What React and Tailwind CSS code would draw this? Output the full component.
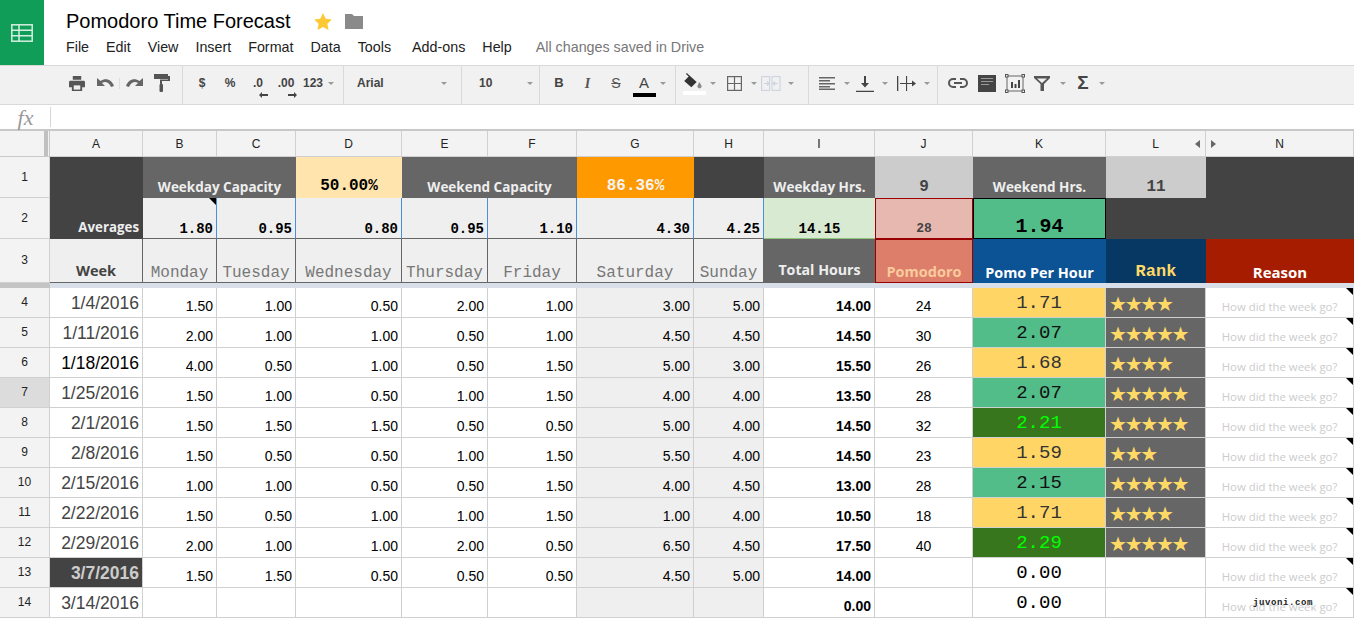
import React from "react";

const SANS = "font-['Liberation_Sans',Arial,sans-serif]";
const OPEN = "font-['Open_Sans',sans-serif]";
const MONO = "font-['Liberation_Mono',monospace]";

const Caret = () => (
  <svg width="6" height="3" viewBox="0 0 6 3"><path d="M0 0h6L3 3z" fill="#999" /></svg>
);

const Print = () => (
  <svg width="16" height="15" viewBox="0 0 17 16" fill="#555"><path d="M4 0h9v4H4zM1.500 5h14A1.500 1.500 0 0 1 17 6.500V12h-3v4H3v-4H0V6.500A1.500 1.500 0 0 1 1.500 5z" /><path d="M5 10h7v4.500H5z" fill="#eee" /></svg>
);
const Undo = () => (
  <svg width="17" height="11" viewBox="0 0 17 11" fill="#666"><path d="M0 0v8h8L5 5c3-2 7-1 9 4l3-1C15 2 9-1 3.500 3z" /></svg>
);
const Redo = () => (
  <svg width="17" height="11" viewBox="0 0 17 11" fill="#666"><path d="M17 0v8H9l3-3C9 3 5 4 3 9L0 8c2-6 8-9 13.500-5z" /></svg>
);
const Roller = () => (
  <svg width="16" height="18" viewBox="0 0 16 18" fill="#555"><path d="M0 0h14v5H0z" /><path d="M14 2h2v5H8v3H6V5.500h8z" /><rect x="5.500" y="10" width="3.500" height="8" rx="1" /></svg>
);
const Fill = () => (
  <svg width="20" height="16" viewBox="0 0 22 18" fill="#333"><path d="M3 0l2 2 9 8-6 6L0 9l5-5-3-3z" /><path d="M17 10c2 3 2.500 4 2.500 5a2.300 2.300 0 0 1-4.600 0c0-1 .5-2 2.100-5z" fill="#888" /></svg>
);
const Borders = () => (
  <svg width="15" height="15" viewBox="0 0 15 15" fill="none" stroke="#666" strokeWidth="1.200"><rect x=".6" y=".6" width="13.800" height="13.800" /><path d="M7.500 0v15M0 7.500h15" /></svg>
);
const Merge = () => (
  <svg width="20" height="15" viewBox="0 0 20 15" fill="none" stroke="#ccd3de" strokeWidth="1.100"><rect x=".6" y=".6" width="8" height="13.800" /><rect x="11" y=".6" width="8" height="13.800" /><path d="M3 7.500h5m-2-2 2 2-2 2M17 7.500h-5m2-2-2 2 2 2" /></svg>
);
const AlignL = () => (
  <svg width="16" height="13" viewBox="0 0 16 13" fill="#666"><path d="M0 0h16v1.500H0zM0 3h11v1.500H0zM0 6h16v1.500H0zM0 9h11v1.500H0zM0 11.500h16V13H0z" /></svg>
);
const VAlign = () => (
  <svg width="18" height="17" viewBox="0 0 18 17" fill="#444"><path d="M8 1h2v7h3l-4 4.500L5 8h3zM0 15.700h18V17H0z" /></svg>
);
const Wrap = () => (
  <svg width="20" height="15" viewBox="0 0 20 15" fill="#444"><path d="M0 0h1.300v15H0zM9 0h1.100v15H9zM3 7h12V4.500l4 3-4 3V8H3z" /></svg>
);
const LinkIcon = () => (
  <svg width="20" height="10" viewBox="0 0 20 10" fill="none" stroke="#555" strokeWidth="2"><path d="M8 1H5a4 4 0 0 0 0 8h3M12 1h3a4 4 0 0 1 0 8h-3M6 5h8" /></svg>
);
const Comment = () => (
  <svg width="18" height="17" viewBox="0 0 18 17" fill="#444"><path d="M0 0h18v17H0z" /><path d="M3 3.500h12M3 6.500h12M3 9.500h8" stroke="#999" strokeWidth="1.200" /></svg>
);
const Chart = () => (
  <svg width="20" height="19" viewBox="0 0 20 19" fill="none"><rect x="2" y="2" width="16" height="15" stroke="#666" /><path d="M6 8h2v6H6zM9.500 10h2v4h-2zM13 6h2v8h-2z" fill="#444" /><g fill="#eee" stroke="#555"><rect x=".5" y=".5" width="2.500" height="2.500" /><rect x="17" y=".5" width="2.500" height="2.500" /><rect x=".5" y="16" width="2.500" height="2.500" /><rect x="17" y="16" width="2.500" height="2.500" /></g></svg>
);
const Filter = () => (
  <svg width="16" height="15" viewBox="0 0 16 15" fill="#555"><path d="M0 0h16v2l-6 6v7H6.500V8L0 2zM3 2.500l5 4.500 5-4.500z" fillRule="evenodd" /></svg>
);
const ArrowL = ({ className }) => (
  <svg className={className} width="9" height="6" viewBox="0 0 9 6" fill="#444"><path d="M0 3l3-3v2h6v2H3v2z" /></svg>
);
const ArrowR = ({ className }) => (
  <svg className={className} width="9" height="6" viewBox="0 0 9 6" fill="#444"><path d="M9 3L6 0v2H0v2h6v2z" /></svg>
);

function Tool({ w, children, className = "" }) {
  return <div className={`flex shrink-0 items-center justify-center ${className}`} style={{ width: w }}>{children}</div>;
}

function Group({ w, children, last }) {
  return (
    <div className={`flex h-full shrink-0 items-center pb-[4px] ${last ? "" : "border-r border-[#d9d9d9]"}`} style={{ width: w }}>
      {children}
    </div>
  );
}

function Toolbar() {
  const label = `${SANS} text-[12px] font-bold text-[#444]`;
  return (
    <div className="flex h-[40px] items-center border-y border-[#d9d9d9] bg-[#f1f1f1] pl-[63px]">
      <Group w={120}>
        <Tool w={28}><Print /></Tool>
        <Tool w={29} className="border-r border-[#dddddd]"><Undo /></Tool>
        <Tool w={28}><Redo /></Tool>
        <Tool w={28}><Roller /></Tool>
      </Group>
      <Group w={161}>
        <Tool w={5} />
        <Tool w={28} className={label}>$</Tool>
        <Tool w={28} className={label}>%</Tool>
        <Tool w={28} className={`${label} relative`}>.0<ArrowL className="absolute bottom-[-6px] left-[15px]" /></Tool>
        <Tool w={28} className={`${label} relative`}>.00<ArrowR className="absolute bottom-[-6px] left-[16px]" /></Tool>
        <Tool w={26} className={label}>123</Tool>
        <Tool w={10}><Caret /></Tool>
      </Group>
      <Group w={118}>
        <span className={`${label} ml-[13px] w-[84px]`}>Arial</span>
        <Caret />
      </Group>
      <Group w={78}>
        <span className={`${label} ml-[17px] w-[48px]`}>10</span>
        <Caret />
      </Group>
      <Group w={136}>
        <Tool w={5} />
        <Tool w={28} className={`${label} text-[13px]`}>B</Tool>
        <Tool w={29} className="font-['Liberation_Serif',serif] text-[14px] font-bold italic text-[#555]">I</Tool>
        <Tool w={28} className={`${SANS} text-[14px] text-[#555] line-through`}>S</Tool>
        <Tool w={28} className={`${SANS} relative text-[15px] text-[#444]`}>A<span className="absolute -bottom-[3px] left-[3px] h-[4px] w-[23px] bg-black" /></Tool>
        <Tool w={10}><Caret /></Tool>
      </Group>
      <Group w={133}>
        <Tool w={7} />
        <Tool w={22} className="relative -mt-[4px]"><Fill /><span className="absolute -bottom-[6px] left-0 h-[4px] w-[23px] bg-white" /></Tool>
        <Tool w={16}><Caret /></Tool>
        <Tool w={26}><Borders /></Tool>
        <Tool w={13}><Caret /></Tool>
        <Tool w={22}><Merge /></Tool>
        <Tool w={18}><Caret /></Tool>
      </Group>
      <Group w={129}>
        <Tool w={6} />
        <Tool w={24}><AlignL /></Tool>
        <Tool w={15}><Caret /></Tool>
        <Tool w={22}><VAlign /></Tool>
        <Tool w={18}><Caret /></Tool>
        <Tool w={25}><Wrap /></Tool>
        <Tool w={16}><Caret /></Tool>
      </Group>
      <Group w={180} last>
        <Tool w={5} />
        <Tool w={29}><LinkIcon /></Tool>
        <Tool w={29}><Comment /></Tool>
        <Tool w={27}><Chart /></Tool>
        <Tool w={28}><Filter /></Tool>
        <Tool w={14}><Caret /></Tool>
        <Tool w={26} className={`${SANS} text-[19px] font-bold text-[#444]`}>Σ</Tool>
        <Tool w={12}><Caret /></Tool>
      </Group>
    </div>
  );
}

function Header() {
  const menu = ["File", "Edit", "View", "Insert", "Format", "Data", "Tools"];
  return (
    <div className="flex h-[65px]">
      <div className="flex w-[44px] items-center justify-center bg-[#0f9d58]">
        <svg width="22" height="18" viewBox="0 0 22 18" fill="none" stroke="#d5eee0" strokeWidth="1.500"><rect x=".8" y=".8" width="20.400" height="16.400" /><path d="M.8 6.200h20.400M.8 11.800h20.400M8 .8v16.400" /></svg>
      </div>
      <div className={`ml-[22px] flex flex-col ${SANS}`}>
        <div className="mt-[9px] flex h-[24px] items-center text-[20px] leading-none text-black">
          <span>Pomodoro Time Forecast</span>
          <svg className="ml-[23px]" width="18" height="17" viewBox="0 0 24 23"><path d="M12 0l3.700 7.800 8.300 1-6.100 5.800 1.600 8.400L12 18.800 4.500 23l1.600-8.400L0 8.800l8.300-1z" fill="#fcc934" /></svg>
          <svg className="ml-[13px]" width="18" height="15" viewBox="0 0 18 15"><path d="M0 0h7l2 2h9v13H0z" fill="#8a8a8a" /></svg>
        </div>
        <div className="mt-[4px] flex items-center gap-[17px] text-[14.3px] leading-[20px] text-[#222]">
          {menu.map((m) => <span key={m}>{m}</span>)}
          <span className="ml-[4px]">Add-ons</span>
          <span>Help</span>
          <span className="ml-[7px] text-[#777]">All changes saved in Drive</span>
        </div>
      </div>
    </div>
  );
}

function FormulaBar() {
  return (
    <div className="flex h-[26px] items-center border-b-2 border-[#c8c8c8] bg-white">
      <div className="flex h-[20px] w-[51px] items-center justify-center border-r border-[#d5d5d5] pl-[1px] font-['Liberation_Serif',serif] text-[22px] italic text-[#999]">fx</div>
    </div>
  );
}

const COLS = ["A", "B", "C", "D", "E", "F", "G", "H", "I", "J", "K", "L", "N"];

function Cell({ className = "", children, note }) {
  return (
    <div className={`relative flex min-w-0 overflow-hidden whitespace-nowrap ${className}`}>
      {children}
      {note && <span className="absolute right-0 top-0 h-0 w-0 border-l-[7px] border-t-[7px] border-l-transparent border-t-black" />}
    </div>
  );
}

const GRID = "border-b border-r border-[#d0d0d0]";
const HEAD_W = `${OPEN} text-[13.5px] font-bold text-[#eeeeee]`;
const AVG = `${MONO} items-end justify-end bg-[#efefef] pr-[3px] text-[14px] font-bold leading-[18px] text-black border-r border-r-[#4a90d9] border-b border-b-[#666]`;
const DAY = `${MONO} items-end justify-center bg-[#efefef] pb-[1px] text-[16px] leading-[16px] text-[#777] border-r border-b border-[#666]`;

const ROWS = [
  ["1/4/2016", "1.50", "1.00", "0.50", "2.00", "1.00", "3.00", "5.00", "14.00", "24", "1.71", 4],
  ["1/11/2016", "2.00", "1.00", "1.00", "0.50", "1.00", "4.50", "4.50", "14.50", "30", "2.07", 5],
  ["1/18/2016", "4.00", "0.50", "1.00", "0.50", "1.50", "5.00", "3.00", "15.50", "26", "1.68", 4],
  ["1/25/2016", "1.50", "1.00", "0.50", "1.00", "1.50", "4.00", "4.00", "13.50", "28", "2.07", 5],
  ["2/1/2016", "1.50", "1.50", "1.50", "0.50", "0.50", "5.00", "4.00", "14.50", "32", "2.21", 5],
  ["2/8/2016", "1.50", "0.50", "0.50", "1.00", "1.50", "5.50", "4.00", "14.50", "23", "1.59", 3],
  ["2/15/2016", "1.00", "1.00", "0.50", "0.50", "1.50", "4.00", "4.50", "13.00", "28", "2.15", 5],
  ["2/22/2016", "1.50", "0.50", "1.00", "1.00", "1.50", "1.00", "4.00", "10.50", "18", "1.71", 4],
  ["2/29/2016", "2.00", "1.00", "1.00", "2.00", "0.50", "6.50", "4.50", "17.50", "40", "2.29", 5],
  ["3/7/2016", "1.50", "1.50", "0.50", "0.50", "0.50", "4.50", "5.00", "14.00", "", "0.00", 0],
  ["3/14/2016", "", "", "", "", "", "", "", "0.00", "", "0.00", 0],
];

function pomoStyle(v) {
  const n = parseFloat(v);
  if (n === 0) return "bg-white text-black";
  if (n >= 2.2) return "bg-[#38761d] text-[#00ff00]";
  if (n >= 2) return "bg-[#52bd89] text-[#111]";
  return "bg-[#ffd666] text-[#333]";
}

function RowHead({ n, className = "" }) {
  return (
    <div className={`flex items-center justify-center border-b border-r border-[#d0d0d0] ${SANS} text-[12px] text-[#222] ${className || "bg-[#f3f3f3]"}`}>
      <span className="-mt-[1px]">{n}</span>
    </div>
  );
}

function DataRow({ r, i }) {
  const [date, ...rest] = r;
  const num = `${SANS} ${GRID} items-end justify-end pb-[2px] pr-[3px] text-[14px] leading-[18px] text-black`;
  const isLast = i === 9;
  const dateCls = isLast
    ? `bg-[#434343] font-bold text-[#cccccc]`
    : i === 2 ? "text-black" : "text-[#444]";
  return (
    <>
      <RowHead n={i + 4} className={i === 3 ? "bg-[#dcdcdc]" : ""} />
      <Cell className={`${SANS} ${GRID} items-center justify-end pr-[3px] text-[17.5px] leading-[20px] ${dateCls}`}>
        <span className="mt-[1px]">{date}</span>
      </Cell>
      {rest.slice(0, 5).map((v, k) => <Cell key={k} className={num}>{v}</Cell>)}
      <Cell className={`${num} bg-[#efefef]`}>{rest[5]}</Cell>
      <Cell className={`${num} bg-[#efefef]`}>{rest[6]}</Cell>
      <Cell className={`${num} font-bold`}>{rest[7]}</Cell>
      <Cell className={`${num} !justify-center !pr-0`}>{rest[8]}</Cell>
      <Cell className={`${MONO} ${GRID} items-center justify-center text-[19px] leading-[20px] ${pomoStyle(rest[9])}`}>
        {rest[9]}
      </Cell>
      <Cell className={`${GRID} items-center pl-[3px] font-['DejaVu_Sans',sans-serif] text-[20px] leading-[20px] tracking-[-2.3px] text-[#ffd966] ${rest[10] ? "bg-[#666666]" : ""}`}>
        <span className="mt-[2px]">{"★".repeat(rest[10])}</span>
      </Cell>
      <Cell note className={`${OPEN} ${GRID} items-end justify-center pb-[1px] text-[11.4px] font-medium leading-[18px] text-[#cccccc]`}>
        How did the week go?
      </Cell>
    </>
  );
}

function Sheet() {
  return (
    <div className="relative grid grid-cols-[50px_93px_74px_79px_106px_86px_89px_117px_70px_111px_98px_133px_100px_148px] grid-rows-[26px_41px_41px_44px_5px_repeat(11,30px)] bg-white">
      {/* column headers */}
      <div className="relative border-b border-r border-[#c8c8c8] bg-[#f3f3f3]">
        <span className="absolute bottom-0 right-[1px] top-0 w-[4px] bg-[#c0c0c0]" />
      </div>
      {COLS.map((c) => (
        <div key={c} className={`relative flex items-center justify-center border-b border-r border-[#d0d0d0] bg-[#f3f3f3] ${SANS} text-[12px] text-[#222]`}>
          {c}
          {c === "L" && <span className="absolute right-[5px] top-[9px] h-0 w-0 border-y-[4px] border-r-[5px] border-y-transparent border-r-[#666]" />}
          {c === "N" && <span className="absolute left-[5px] top-[9px] h-0 w-0 border-y-[4px] border-l-[5px] border-y-transparent border-l-[#666]" />}
        </div>
      ))}

      {/* row 1 */}
      <RowHead n={1} />
      <Cell className={`row-span-2 items-end justify-end bg-[#434343] pb-[2px] pr-[4px] leading-[20px] ${HEAD_W} !text-[13.3px] text-[#cccccc]`}>Averages</Cell>
      <Cell className={`col-span-2 items-end justify-center bg-[#666666] pb-[1px] leading-[20px] ${HEAD_W}`}>Weekday Capacity</Cell>
      <Cell className={`${MONO} items-end justify-center bg-[#ffe5ad] pb-[2px] text-[16px] font-bold leading-[20px] text-black`}>50.00%</Cell>
      <Cell className={`col-span-2 items-end justify-center bg-[#666666] pb-[1px] leading-[20px] ${HEAD_W}`}>Weekend Capacity</Cell>
      <Cell className={`${MONO} items-end justify-center bg-[#ff9900] pb-[2px] text-[16px] font-bold leading-[20px] text-[#f3f3f3]`}>86.36%</Cell>
      <Cell className="bg-[#434343]" />
      <Cell className={`items-end justify-center bg-[#666666] pb-[1px] leading-[20px] ${HEAD_W}`}>Weekday Hrs.</Cell>
      <Cell className={`${MONO} items-end justify-center bg-[#cccccc] pb-[1px] text-[16px] font-bold leading-[20px] text-[#434343]`}>9</Cell>
      <Cell className={`items-end justify-center bg-[#666666] pb-[1px] leading-[20px] ${HEAD_W}`}>Weekend Hrs.</Cell>
      <Cell className={`${MONO} items-end justify-center bg-[#cccccc] pb-[1px] text-[16px] font-bold leading-[20px] text-[#434343]`}>11</Cell>
      <Cell className="bg-[#434343]" />

      {/* row 2 */}
      <RowHead n={2} />
      <Cell note className={AVG}>1.80</Cell>
      <Cell className={AVG}>0.95</Cell>
      <Cell className={AVG}>0.80</Cell>
      <Cell className={AVG}>0.95</Cell>
      <Cell className={AVG}>1.10</Cell>
      <Cell className={AVG}>4.30</Cell>
      <Cell className={AVG}>4.25</Cell>
      <Cell className={`${MONO} items-end justify-center border-b border-[#93c47d] bg-[#d9ead3] text-[14px] font-bold leading-[18px] text-black`}>14.15</Cell>
      <Cell className={`${MONO} items-end justify-center border border-[#980000] bg-[#e6b8af] text-[13px] font-bold leading-[18px] text-[#434343]`}>28</Cell>
      <Cell className={`${MONO} items-end justify-center border border-black bg-[#52bd89] text-[20px] font-bold leading-[22px] text-black`}>1.94</Cell>
      <Cell className="col-span-2 bg-[#434343]" />

      {/* row 3 */}
      <RowHead n={3} />
      <Cell className={`${OPEN} items-end justify-center border-b border-r border-[#666] bg-[#efefef] text-[14.5px] font-bold leading-[22px] text-[#434343]`}>Week</Cell>
      {["Monday", "Tuesday", "Wednesday", "Thursday", "Friday", "Saturday", "Sunday"].map((d) => (
        <Cell key={d} className={DAY}>{d}</Cell>
      ))}
      <Cell className={`${OPEN} items-end justify-center bg-[#666666] pb-[2px] text-[14.2px] font-bold leading-[22px] text-[#eeeeee]`}>Total Hours</Cell>
      <Cell className={`${OPEN} items-end justify-center border border-[#980000] bg-[#dd7e6b] text-[14.5px] font-bold leading-[20px] text-[#f9cb9c]`}>Pomodoro</Cell>
      <Cell className={`${OPEN} items-end justify-center bg-[#0b5394] text-[14.4px] font-bold leading-[20px] text-white`}>Pomo Per Hour</Cell>
      <Cell className={`${MONO} items-end justify-center bg-[#073763] text-[17px] font-bold leading-[22px] text-[#ffd966]`}>Rank</Cell>
      <Cell className={`${OPEN} items-end justify-center bg-[#a61c00] pb-[1px] text-[15px] font-bold leading-[20px] text-white`}>Reason</Cell>

      {/* frozen divider */}
      <div className="bg-[#c4c4c4]" />
      <div className="col-span-13 bg-[#d9dfe9]" />

      {ROWS.map((r, i) => <DataRow key={r[0]} r={r} i={i} />)}

      <span className={`${MONO} absolute left-[1253px] top-[466px] text-[9px] font-bold leading-[12px] tracking-[0.6px] text-[#222]`}>juvoni.com</span>
    </div>
  );
}

export default function App() {
  return (
    <div className="h-[618px] w-[1354px] overflow-hidden bg-white">
      <Header />
      <Toolbar />
      <FormulaBar />
      <Sheet />
    </div>
  );
}
